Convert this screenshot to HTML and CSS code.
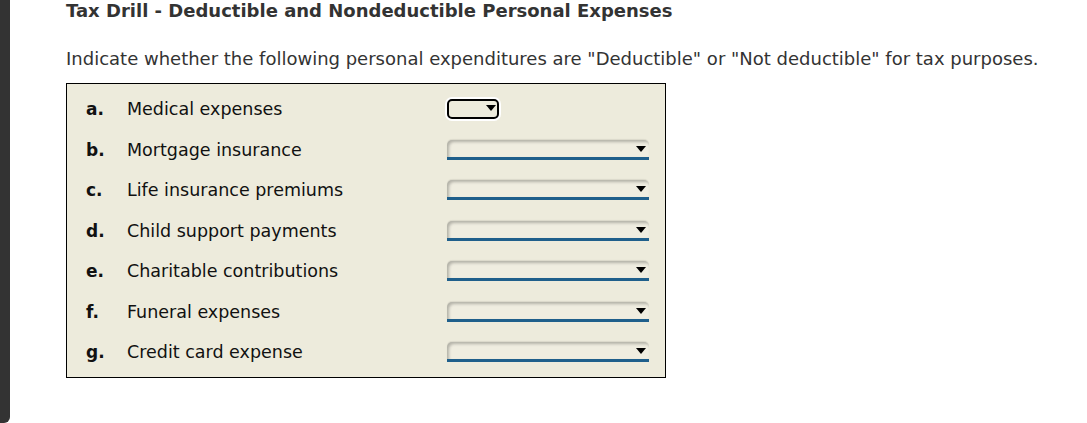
FILE: index.html
```html
<!DOCTYPE html>
<html lang="en">

<head>
    <meta charset="UTF-8">
    <title>Tax Drill</title>
    <link rel="stylesheet" href="styles.css">
</head>

<body>
    <div class="side-bar"></div>

    <div class="content">
        <h1>Tax Drill - Deductible and Nondeductible Personal Expenses</h1>

        <p class="instructions">Indicate whether the following personal expenditures are "Deductible" or "Not deductible" for tax purposes.</p>

        <div class="drill-box">
            <div class="drill-row">
                <span class="letter">a.</span>
                <span class="label">Medical expenses</span>
                <span class="pick pick-focus"><span class="arrow"></span></span>
            </div>
            <div class="drill-row">
                <span class="letter">b.</span>
                <span class="label">Mortgage insurance</span>
                <span class="pick"><span class="arrow"></span></span>
            </div>
            <div class="drill-row">
                <span class="letter">c.</span>
                <span class="label">Life insurance premiums</span>
                <span class="pick"><span class="arrow"></span></span>
            </div>
            <div class="drill-row">
                <span class="letter">d.</span>
                <span class="label">Child support payments</span>
                <span class="pick"><span class="arrow"></span></span>
            </div>
            <div class="drill-row">
                <span class="letter">e.</span>
                <span class="label">Charitable contributions</span>
                <span class="pick"><span class="arrow"></span></span>
            </div>
            <div class="drill-row">
                <span class="letter">f.</span>
                <span class="label">Funeral expenses</span>
                <span class="pick"><span class="arrow"></span></span>
            </div>
            <div class="drill-row">
                <span class="letter">g.</span>
                <span class="label">Credit card expense</span>
                <span class="pick"><span class="arrow"></span></span>
            </div>
        </div>
    </div>
</body>

</html>
```

FILE: styles.css
```css
body {
    margin: 0;
    height: 423px;
    display: flex;
    font-family: "DejaVu Sans", Verdana, sans-serif;
    color: #333;
    background-color: #fff;
}

.side-bar {
    width: 10px;
    background-color: #333;
    border-bottom-right-radius: 6px;
}

.content {
    padding-left: 56px;
}

h1 {
    font-size: 18px;
    font-weight: bold;
    margin: 1px 0 0 0;
    line-height: 20px;
}

.instructions {
    font-size: 18px;
    margin: 28px 0 0 0;
    line-height: 20px;
}

.drill-box {
    width: 598px;
    margin-top: 14px;
    border: 1px solid #000;
    background-color: #edebdc;
    padding: 5px 0 4px 0;
    color: #111;
}

.drill-row {
    display: flex;
    align-items: center;
    height: 40.5px;
    font-size: 17.5px;
}

.letter {
    width: 41px;
    padding-left: 19px;
    font-weight: bold;
    font-size: 17px;
}

.label {
    width: 320px;
}

.pick {
    position: relative;
    box-sizing: border-box;
    width: 202px;
    height: 20px;
    border-radius: 5px 5px 0 0;
    border-bottom: 3px solid #1f5f8b;
    box-shadow: inset 2px 2px 3px rgba(0, 0, 0, 0.25), 0 -1px 1px rgba(0, 0, 0, 0.08);
    background-color: #efede0;
}

.pick-focus {
    width: 52px;
    border: 2.5px solid #000;
    border-radius: 5px;
    box-shadow: 0 0 0 2px #fff;
    background-color: #edebdc;
}

.arrow {
    position: absolute;
    right: 3px;
    top: 6px;
    width: 0;
    height: 0;
    border-left: 5px solid transparent;
    border-right: 5px solid transparent;
    border-top: 6px solid #000;
}

.pick-focus .arrow {
    right: 1px;
    top: 4px;
}
```
